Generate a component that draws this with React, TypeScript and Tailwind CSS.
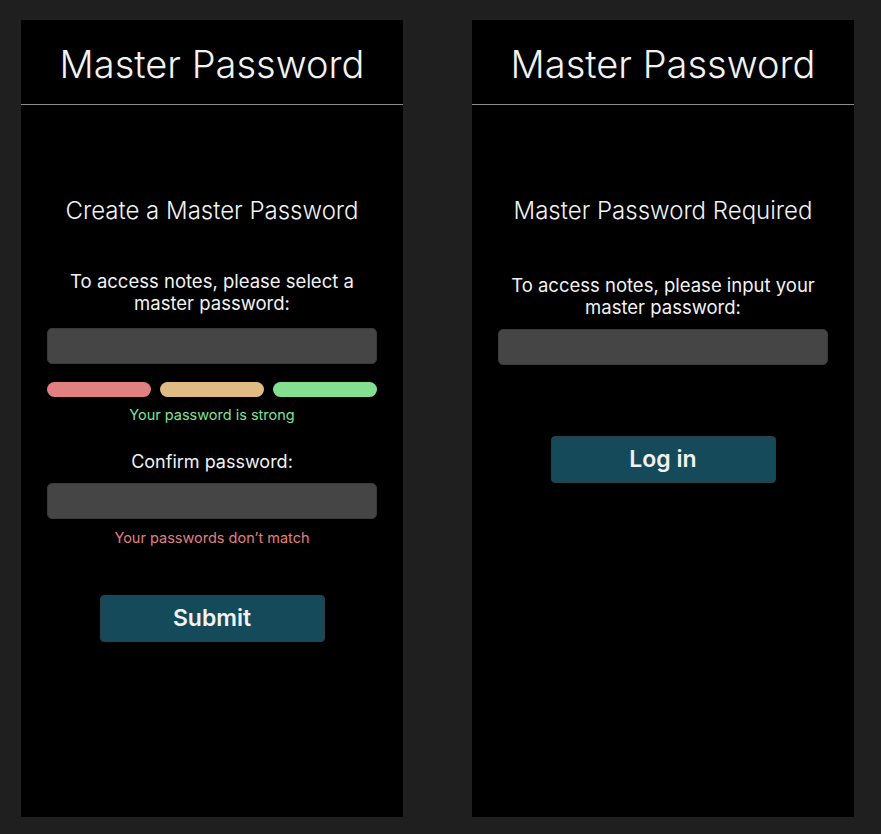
function Header() {
  return (
    <div className="h-[85px] flex items-center justify-center border-b border-[#8c8c8c]">
      <h1 className="text-[38px] font-light text-[#f2f2f2] leading-none mt-[4px]">Master Password</h1>
    </div>
  )
}

function Field() {
  return <div className="w-[330px] h-[36px] rounded-[5px] bg-[#454545] border border-[#3a3a3a]" />
}

function Button({ label }: { label: string }) {
  return (
    <button className="w-[225px] h-[47px] rounded-[4px] bg-[#154a5b] border border-[#2a3f46] text-[23px] font-semibold text-[#f2f2f2]">
      {label}
    </button>
  )
}

function CreatePanel() {
  return (
    <section className="w-[382px] h-[797px] bg-black flex flex-col">
      <Header />
      <div className="flex flex-col items-center text-center text-[#f2f2f2]">
        <h2 className="mt-[92px] text-[24px] leading-[28px] font-light">Create a Master Password</h2>
        <p className="mt-[45px] text-[18.5px] leading-[22px] font-normal">
          To access notes, please select a<br />master password:
        </p>
        <div className="mt-[14px]">
          <Field />
        </div>
        <div className="mt-[18px] w-[330px] flex gap-[9px]">
          <div className="flex-1 h-[15px] rounded-full bg-[#e08080]" />
          <div className="flex-1 h-[15px] rounded-full bg-[#e1bb84]" />
          <div className="flex-1 h-[15px] rounded-full bg-[#84e090]" />
        </div>
        <p className="mt-[8px] text-[14.5px] leading-[20px] font-normal text-[#84e090]">Your password is strong</p>
        <p className="mt-[25px] text-[18px] leading-[24px] font-normal">Confirm password:</p>
        <div className="mt-[9px]">
          <Field />
        </div>
        <p className="mt-[9px] text-[14.5px] leading-[20px] font-normal text-[#e08080]">Your passwords don’t match</p>
        <div className="mt-[47px]">
          <Button label="Submit" />
        </div>
      </div>
    </section>
  )
}

function LoginPanel() {
  return (
    <section className="w-[382px] h-[797px] bg-black flex flex-col">
      <Header />
      <div className="flex flex-col items-center text-center text-[#f2f2f2]">
        <h2 className="mt-[92px] text-[24px] leading-[28px] font-light">Master Password Required</h2>
        <p className="mt-[49px] text-[18.5px] leading-[22px] font-normal">
          To access notes, please input your<br />master password:
        </p>
        <div className="mt-[11px]">
          <Field />
        </div>
        <div className="mt-[71px]">
          <Button label="Log in" />
        </div>
      </div>
    </section>
  )
}

export default function App() {
  return (
    <div
      className="w-[881px] h-[834px] bg-[#1f1f1f] pt-[20px] pl-[21px] flex gap-[69px]"
      style={{ fontFamily: 'Inter, "Noto Sans", sans-serif' }}
    >
      <CreatePanel />
      <LoginPanel />
    </div>
  )
}
